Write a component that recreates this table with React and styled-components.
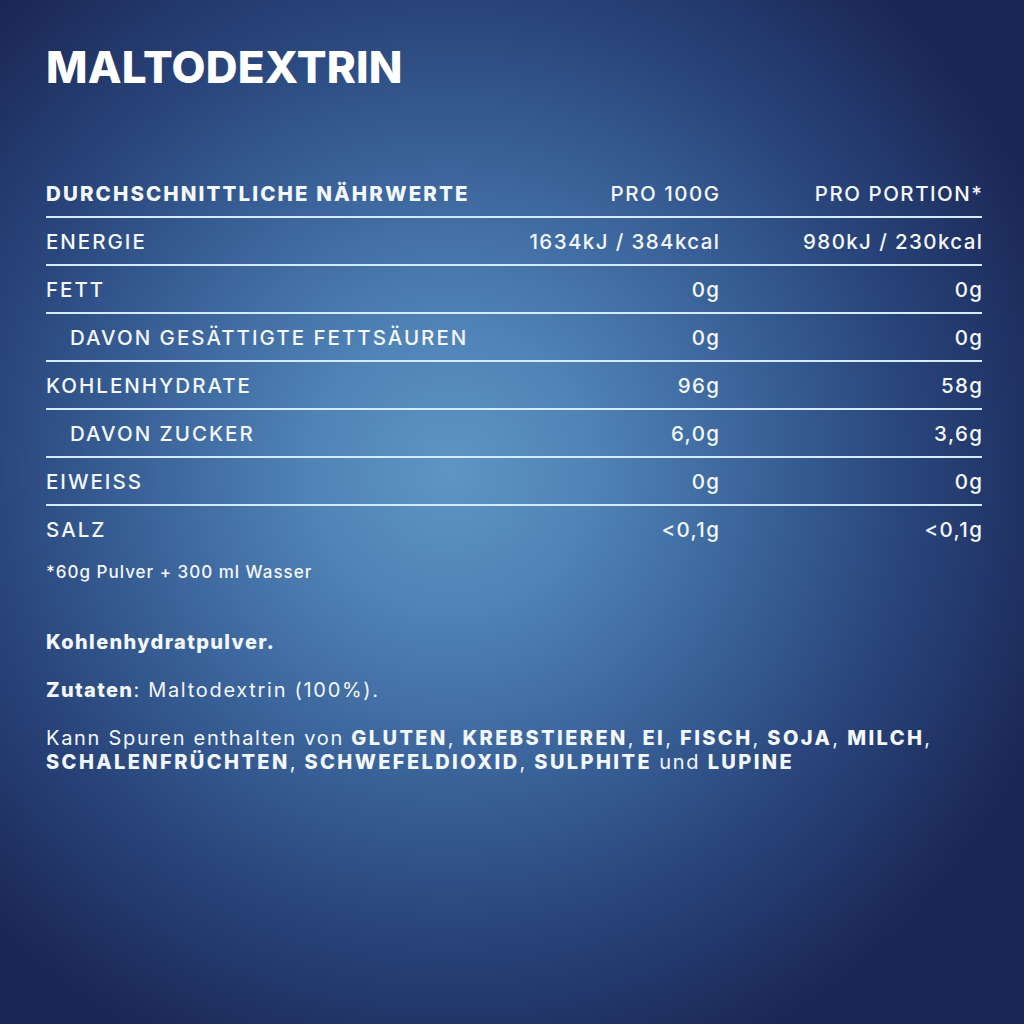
import React from "react";
import styled, { createGlobalStyle } from "styled-components";

const GlobalStyle = createGlobalStyle`
  html, body {
    margin: 0;
    padding: 0;
  }
  body {
    font-family: Inter, "Open Sans", "Liberation Sans", sans-serif;
    color: #f4f8fb;
  }
`;

const rows = [
  { label: "ENERGIE", per100: "1634kJ / 384kcal", portion: "980kJ / 230kcal" },
  { label: "FETT", per100: "0g", portion: "0g" },
  { label: "DAVON GESÄTTIGTE FETTSÄUREN", per100: "0g", portion: "0g", sub: true },
  { label: "KOHLENHYDRATE", per100: "96g", portion: "58g" },
  { label: "DAVON ZUCKER", per100: "6,0g", portion: "3,6g", sub: true },
  { label: "EIWEISS", per100: "0g", portion: "0g" },
  { label: "SALZ", per100: "<0,1g", portion: "<0,1g", last: true },
];

const allergens = [
  "GLUTEN", "KREBSTIEREN", "EI", "FISCH", "SOJA", "MILCH",
  "SCHALENFRÜCHTEN", "SCHWEFELDIOXID", "SULPHITE",
];

const App = () => {
  return (
    <React.Fragment>
      <GlobalStyle />
      <Page>
        <Title>MALTODEXTRIN</Title>

        <Table>
          <Row>
            <HeadCell>DURCHSCHNITTLICHE NÄHRWERTE</HeadCell>
            <HeadValue>PRO 100G</HeadValue>
            <HeadValue>PRO PORTION*</HeadValue>
          </Row>
          {rows.map((r) => (
            <Row key={r.label} $last={r.last}>
              <Label $sub={r.sub}>{r.label}</Label>
              <Value>{r.per100}</Value>
              <Value>{r.portion}</Value>
            </Row>
          ))}
        </Table>

        <Footnote>*60g Pulver + 300 ml Wasser</Footnote>

        <Info>
          <Para>
            <Strong>Kohlenhydratpulver.</Strong>
          </Para>
          <Para>
            <Strong>Zutaten</Strong>: Maltodextrin (100%).
          </Para>
          <Para>
            Kann Spuren enthalten von{" "}
            {allergens.map((a, i) => (
              <React.Fragment key={a}>
                <Strong $caps>{a}</Strong>
                {i < allergens.length - 1 ? ", " : " "}
              </React.Fragment>
            ))}
            und <Strong $caps>LUPINE</Strong>
          </Para>
        </Info>
      </Page>
    </React.Fragment>
  );
};

export default App;

const Page = styled.div`
  width: 1024px;
  height: 1024px;
  box-sizing: border-box;
  padding: 40px 40px 0 46px;
  background: radial-gradient(
    ellipse 640px 640px at 450px 470px,
    #5e95c5 0%,
    #5083b7 22%,
    #3a639a 48%,
    #29457b 72%,
    #1b2756 100%
  );
  overflow: hidden;
`;

const Title = styled.h1`
  margin: 0;
  font-family: Inter, "Liberation Sans", sans-serif;
  font-weight: 800;
  font-size: 44px;
  line-height: 54px;
  letter-spacing: 0.2px;
  color: #ffffff;
`;

const Table = styled.div`
  margin-top: 76px;
  width: 936px;
`;

const Row = styled.div`
  display: grid;
  grid-template-columns: 1fr 220px 263px;
  align-items: center;
  height: 46px;
  border-bottom: ${(p) => (p.$last ? "none" : "2px solid #d3ecf6")};
  font-size: 20.5px;
  font-weight: 500;
  letter-spacing: 2px;
`;

const HeadCell = styled.div`
  font-weight: 800;
  letter-spacing: 2.1px;
  white-space: nowrap;
`;

const HeadValue = styled.div`
  text-align: right;
  font-weight: 500;
  letter-spacing: 1.5px;
  white-space: nowrap;
  margin-right: -1.5px;
`;

const Label = styled.div`
  padding-left: ${(p) => (p.$sub ? "24px" : "0")};
  white-space: nowrap;
`;

const Value = styled.div`
  text-align: right;
  white-space: nowrap;
  letter-spacing: 1.4px;
  margin-right: -1.4px;
`;

const Footnote = styled.p`
  margin: 10px 0 0;
  font-size: 17px;
  font-weight: 500;
  letter-spacing: 1px;
`;

const Info = styled.div`
  margin-top: 48px;
  display: flex;
  flex-direction: column;
  gap: 24px;
  width: 960px;
`;

const Para = styled.p`
  margin: 0;
  font-size: 20px;
  line-height: 24px;
  font-weight: 400;
  letter-spacing: 1.7px;
`;

const Strong = styled.b`
  font-weight: 800;
  letter-spacing: ${(p) => (p.$caps ? "2.4px" : "1.35px")};
`;
